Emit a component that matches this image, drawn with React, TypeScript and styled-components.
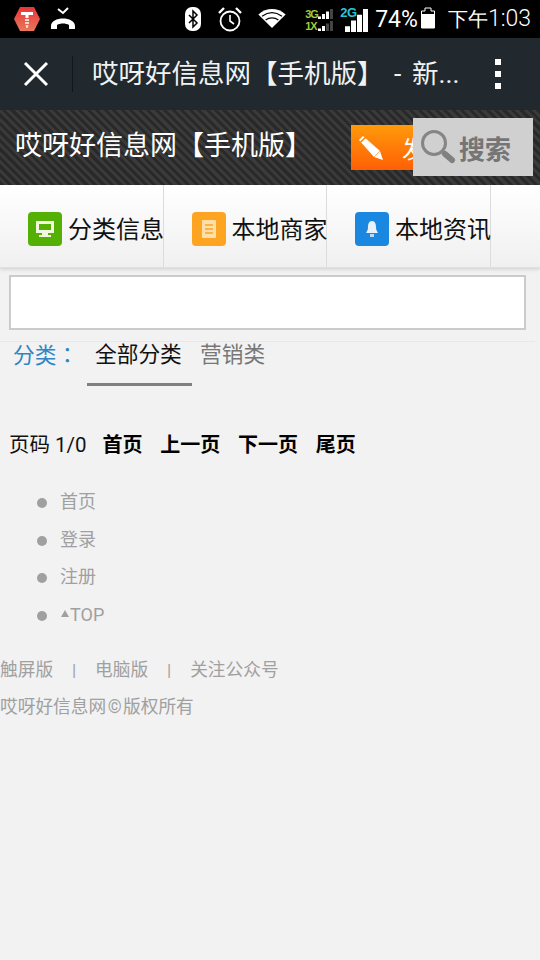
import styled, { createGlobalStyle } from "styled-components"

const CJK = `"Roboto", "Noto Sans CJK SC", sans-serif`

const GlobalStyle = createGlobalStyle`
    html, body {
        margin: 0;
        padding: 0;
        background: #f2f2f2;
    }
    body {
        font-family: ${CJK};
        width: 540px;
        height: 960px;
        overflow: hidden;
        text-spacing-trim: space-all;
    }
    * {
        box-sizing: border-box;
    }
`

function SignalBars({ small, lit }: { small?: boolean; lit: number }) {
    const w = small ? 3 : 5
    const gap = small ? 1 : 1
    const h = small ? 10 : 23
    const n = 4
    return (
        <svg width={n * w + (n - 1) * gap} height={h} style={{ display: "block" }}>
            {[0, 1, 2, 3].map((i) => {
                const bh = (h * (i + 1)) / n
                return (
                    <rect
                        key={i}
                        x={i * (w + gap)}
                        y={h - bh}
                        width={w}
                        height={bh}
                        fill={i < lit ? "#fff" : "#444"}
                    />
                )
            })}
        </svg>
    )
}

function App() {
    return (
        <>
            <GlobalStyle />
            <StatusBar>
                <StatusLeft>
                    <svg width="28" height="26" viewBox="0 0 28 26">
                        <defs>
                            <linearGradient id="hex" x1="0" y1="0" x2="0" y2="1">
                                <stop offset="0" stopColor="#e8343a" />
                                <stop offset="1" stopColor="#e9785a" />
                            </linearGradient>
                        </defs>
                        <polygon points="7,1 21,1 27,13 21,25 7,25 1,13" fill="url(#hex)" />
                        <path d="M8 6h12v3h-4.5v3h-3V9H8z" fill="#fff" />
                        <path d="M12 13h4v2h-4zM12 16h4v2h-4zM12.5 19h3l-.8 3h-1.4z" fill="#fbd9c8" />
                    </svg>
                    <CallIcon width="26" height="24" viewBox="0 0 26 24">
                        <path d="M8 2l5 4 5-5" fill="none" stroke="#fff" strokeWidth="2" />
                        <path
                            d="M1 19c0-10 24-10 24 0v3h-6v-4c-3-2-9-2-12 0v4H1z"
                            fill="#fff"
                        />
                    </CallIcon>
                </StatusLeft>
                <StatusRight>
                    <svg width="16" height="24" viewBox="0 0 16 24">
                        <rect width="16" height="24" rx="7" fill="#fff" />
                        <path d="M4 8l8 8-4 4V4l4 4-8 8" fill="none" stroke="#000" strokeWidth="1.5" />
                    </svg>
                    <AlarmIcon width="26" height="26" viewBox="0 0 26 26">
                        <circle cx="13" cy="15" r="9.5" fill="none" stroke="#fff" strokeWidth="1.8" />
                        <path d="M13 9v6l4 3" fill="none" stroke="#fff" strokeWidth="1.6" />
                        <path d="M2 7l5-5M24 7l-5-5" stroke="#fff" strokeWidth="2.4" />
                    </AlarmIcon>
                    <WifiIcon width="28" height="20" viewBox="0 0 30 22">
                        <path d="M15 21L0 6c9-8 21-8 30 0z" fill="#fff" />
                        <path
                            d="M4 8c7-5 15-5 22 0M8 12c4-3 10-3 14 0"
                            fill="none"
                            stroke="#000"
                            strokeWidth="1.4"
                        />
                    </WifiIcon>
                    <NetworkStack>
                        <NetRow>
                            <NetLabel>3G</NetLabel>
                            <SignalBars small lit={3} />
                        </NetRow>
                        <NetRow>
                            <NetLabel>1X</NetLabel>
                            <SignalBars small lit={2} />
                        </NetRow>
                    </NetworkStack>
                    <SecondNet>
                        <NetLabelBig>2G</NetLabelBig>
                        <SignalBars lit={4} />
                    </SecondNet>
                    <Battery>74%</Battery>
                    <BatteryIcon width="14" height="22" viewBox="0 0 14 22">
                        <path d="M4 1h6v3h3.5v17H.5V4H4z" fill="none" stroke="#fff" strokeWidth="1" />
                        <rect x="1" y="7" width="12" height="14" fill="#fff" />
                    </BatteryIcon>
                    <Clock>
                        <ClockCjk>下午</ClockCjk>1:03
                    </Clock>
                </StatusRight>
            </StatusBar>

            <Toolbar>
                <CloseButton>
                    <svg width="26" height="26" viewBox="0 0 26 26">
                        <path d="M2 2l22 22M24 2L2 24" stroke="#fff" strokeWidth="3" />
                    </svg>
                </CloseButton>
                <ToolbarDivider />
                <ToolbarTitle>哎呀好信息网【手机版】 - 新...</ToolbarTitle>
                <MoreDots>
                    <i />
                    <i />
                    <i />
                </MoreDots>
            </Toolbar>

            <Header>
                <HeaderTitle>哎呀好信息网【手机版】</HeaderTitle>
                <PublishButton>
                    <svg width="28" height="28" viewBox="0 0 28 28">
                        <path d="M5 2L1 6l15 17 9 3-3-9z" fill="#fff" />
                        <path d="M2.5 8l5-4.5" stroke="#ff7a10" strokeWidth="1.5" />
                        <path d="M16 23l6-6" stroke="#ffb070" strokeWidth="1" />
                    </svg>
                    <PublishText>发布</PublishText>
                </PublishButton>
                <SearchOverlay>
                    <svg width="36" height="36" viewBox="0 0 36 36">
                        <circle cx="14" cy="14" r="11.5" fill="none" stroke="#858585" strokeWidth="3" />
                        <path d="M25 25l7 6" stroke="#808080" strokeWidth="6" strokeLinecap="round" />
                    </svg>
                    <SearchText>搜索</SearchText>
                </SearchOverlay>
            </Header>

            <Nav>
                <NavCell>
                    <NavIcon $color="#54b004">
                        <svg width="22" height="22" viewBox="0 0 22 22">
                            <path
                                d="M2 3h18v12H14v2h3v2H5v-2h3v-2H2zM5 6v6h12V6z"
                                fill="#f0f6e0"
                                fillRule="evenodd"
                            />
                        </svg>
                    </NavIcon>
                    <NavText>分类信息</NavText>
                </NavCell>
                <NavCell>
                    <NavIcon $color="#fda523">
                        <svg width="22" height="22" viewBox="0 0 22 22">
                            <rect x="4" y="2" width="14" height="18" rx="1" fill="#fedfa8" />
                            <path d="M7 7h8M7 11h8M7 15h8" stroke="#fda523" strokeWidth="1.4" />
                        </svg>
                    </NavIcon>
                    <NavText>本地商家</NavText>
                </NavCell>
                <NavCell>
                    <NavIcon $color="#1a88e0">
                        <svg width="22" height="22" viewBox="0 0 22 22">
                            <path d="M11 3c3 0 4 3 4 6 0 3 1 4 2 6H5c1-2 2-3 2-6 0-3 1-6 4-6z" fill="#e8f2fc" />
                            <rect x="9" y="16" width="4" height="3" fill="#b8daf6" />
                        </svg>
                    </NavIcon>
                    <NavText>本地资讯</NavText>
                </NavCell>
            </Nav>

            <InputRow>
                <SearchInput />
            </InputRow>

            <Tabs>
                <TabLabel>
                    分类<ColonMark>：</ColonMark>
                </TabLabel>
                <Tab $active>全部分类</Tab>
                <Tab>营销类</Tab>
            </Tabs>

            <Pager>
                <PageInfo>页码 1/0</PageInfo>
                <PageLink>首页</PageLink>
                <PageLink>上一页</PageLink>
                <PageLink>下一页</PageLink>
                <PageLink>尾页</PageLink>
            </Pager>

            <LinkList>
                <li>首页</li>
                <li>登录</li>
                <li>注册</li>
                <li>
                    <TopArrow />
                    TOP
                </li>
            </LinkList>

            <FooterLinks>
                <span>触屏版</span>
                <Pipe>|</Pipe>
                <span>电脑版</span>
                <Pipe>|</Pipe>
                <span>关注公众号</span>
            </FooterLinks>
            <Copyright>
                哎呀好信息网<CopyMark>©</CopyMark>版权所有
            </Copyright>
        </>
    )
}

export default App

const StatusBar = styled.div`
    height: 38px;
    background: #000;
    display: flex;
    align-items: center;
    justify-content: space-between;
    padding: 0 9px 0 13px;
    color: #fff;
`

const StatusLeft = styled.div`
    display: flex;
    align-items: center;
`

const CallIcon = styled.svg`
    margin-left: 9px;
`

const StatusRight = styled.div`
    display: flex;
    align-items: center;
`

const AlarmIcon = styled.svg`
    margin-left: 16px;
`

const WifiIcon = styled.svg`
    margin-left: 15px;
`

const NetworkStack = styled.div`
    display: flex;
    flex-direction: column;
    gap: 2px;
    margin-left: 19px;
    margin-top: 1px;
`

const NetRow = styled.div`
    display: flex;
    align-items: flex-end;
    height: 10px;
`

const NetLabel = styled.span`
    font-family: "Liberation Sans", sans-serif;
    font-size: 11px;
    font-weight: 700;
    line-height: 10px;
    width: 13px;
    color: #9ccc3c;
    letter-spacing: -1px;
`

const SecondNet = styled.div`
    display: flex;
    align-items: flex-end;
    margin-left: 6px;
    margin-top: 3px;
    height: 23px;
    position: relative;
    width: 29px;
    justify-content: flex-end;
`

const NetLabelBig = styled.span`
    position: absolute;
    left: 1px;
    top: -3px;
    line-height: 14px;
    font-family: "Liberation Sans", sans-serif;
    font-size: 13px;
    font-weight: 700;
    color: #26c6da;
    letter-spacing: -0.5px;
`

const Battery = styled.span`
    font-family: "Roboto", sans-serif;
    font-size: 23px;
    margin: 0 3px 0 7px;
`

const BatteryIcon = styled.svg`
    margin-top: -3px;
`

const Clock = styled.span`
    font-family: "Roboto", sans-serif;
    font-size: 23px;
    font-weight: 300;
    margin-left: 13px;
    white-space: nowrap;
`

const ClockCjk = styled.span`
    font-size: 20px;
`

const Toolbar = styled.div`
    height: 72px;
    background: #21292e;
    display: flex;
    align-items: center;
`

const CloseButton = styled.div`
    width: 72px;
    display: flex;
    justify-content: center;
    align-items: center;
`

const ToolbarDivider = styled.div`
    width: 1px;
    height: 36px;
    background: #11171a;
`

const ToolbarTitle = styled.div`
    margin: -5px 0 0 19px;
    font-size: 26.5px;
    word-spacing: 4px;
    color: #f0f2f2;
    white-space: nowrap;
    flex: 1;
`

const MoreDots = styled.div`
    width: 22px;
    margin-right: 31px;
    display: flex;
    flex-direction: column;
    align-items: center;
    gap: 6px;

    i {
        display: block;
        width: 6px;
        height: 6px;
        background: #fff;
    }
`

const Header = styled.div`
    height: 75px;
    position: relative;
    display: flex;
    align-items: center;
    padding-left: 15px;
    background: repeating-linear-gradient(
        45deg,
        #292929 0,
        #292929 3px,
        #3a3a3a 3px,
        #3a3a3a 6px
    );
`

const HeaderTitle = styled.div`
    font-size: 27px;
    color: #fff;
    white-space: nowrap;
    margin-top: -9px;
`

const PublishButton = styled.div`
    position: absolute;
    left: 351px;
    top: 15px;
    width: 120px;
    height: 45px;
    display: flex;
    align-items: center;
    padding-left: 7px;
    background: linear-gradient(#ff9a0a, #ff5f05);
`

const PublishText = styled.span`
    color: #fff;
    font-size: 24px;
    margin-left: 16px;
`

const SearchOverlay = styled.div`
    position: absolute;
    left: 413px;
    top: 8px;
    width: 120px;
    height: 58px;
    background: #d0d0d0;
    display: flex;
    align-items: center;
    padding-left: 7px;
`

const SearchText = styled.span`
    font-size: 26px;
    font-weight: 700;
    color: #757575;
    margin-left: 3px;
`

const Nav = styled.div`
    height: 83px;
    display: flex;
    background: linear-gradient(#ffffff, #f0f0f0);
    border-bottom: 1px solid #dfdfdf;
    box-shadow: 0 2px 3px #d8d8d8;
`

const NavCell = styled.div`
    width: 163.5px;
    display: flex;
    align-items: center;
    justify-content: flex-end;
    white-space: nowrap;
    border-right: 1px solid #dcdcdc;
    padding-top: 6px;
`

const NavIcon = styled.div<{ $color: string }>`
    width: 34px;
    height: 34px;
    border-radius: 4px;
    background: ${({ $color }) => $color};
    display: flex;
    align-items: center;
    justify-content: center;
    margin-right: 6px;
`

const NavText = styled.span`
    font-size: 24px;
    color: #111;
    width: 94.5px;
    margin-top: -4px;
`

const InputRow = styled.div`
    padding: 7px 14px 0 9px;
`

const SearchInput = styled.div`
    height: 55px;
    background: #fff;
    border: 2px solid #cbcbcb;
`

const Tabs = styled.div`
    margin: 11px 5px 0 0;
    padding-left: 13px;
    border-top: 1px solid #e8e8e8;
    display: flex;
    height: 44px;
`

const TabLabel = styled.div`
    font-size: 21.7px;
    color: #2f86c4;
    width: 74px;
    line-height: 24px;
`

const ColonMark = styled.span`
    font-family: "Noto Sans CJK TC", sans-serif;
`

const Tab = styled.div<{ $active?: boolean }>`
    font-size: 21.7px;
    line-height: 26px;
    padding: 0 8px;
    color: ${({ $active }) => ($active ? "#111" : "#777")};
    height: 44px;
    width: ${({ $active }) => ($active ? "105px" : "auto")};
    border-bottom: ${({ $active }) => ($active ? "3px solid #808080" : "none")};
`

const Pager = styled.div`
    display: flex;
    align-items: center;
    margin-top: 45px;
    padding-left: 9px;
    height: 26px;
    gap: 17.7px;
    font-size: 20px;
    color: #111;
`

const PageInfo = styled.span`
    font-size: 20.5px;
    margin-right: -1.7px;
`

const PageLink = styled.span`
    font-weight: 700;
    color: #000;
`

const LinkList = styled.ul`
    list-style: none;
    margin: 31px 0 0;
    padding: 0 0 0 60px;

    li {
        position: relative;
        height: 37.5px;
        line-height: 30px;
        font-size: 18px;
        color: #a0a0a0;
    }

    li::before {
        content: "";
        position: absolute;
        left: -23px;
        top: 11px;
        width: 10px;
        height: 10px;
        border-radius: 50%;
        background: #a0a0a0;
    }
`

const TopArrow = styled.span`
    display: inline-block;
    width: 0;
    height: 0;
    margin: 0 1px 4px 1px;
    border-left: 4px solid transparent;
    border-right: 4px solid transparent;
    border-bottom: 7px solid #a0a0a0;
`

const FooterLinks = styled.div`
    display: flex;
    margin-top: 18px;
    font-size: 17.7px;
    line-height: 30px;
    color: #a0a0a0;
    white-space: nowrap;
`

const Pipe = styled.span`
    width: 42px;
    text-align: center;
    font-size: 17px;
`

const Copyright = styled.div`
    margin-top: 7px;
    font-size: 17.7px;
    line-height: 30px;
    color: #a0a0a0;
`

const CopyMark = styled.span`
    padding: 0 1.5px;
`
